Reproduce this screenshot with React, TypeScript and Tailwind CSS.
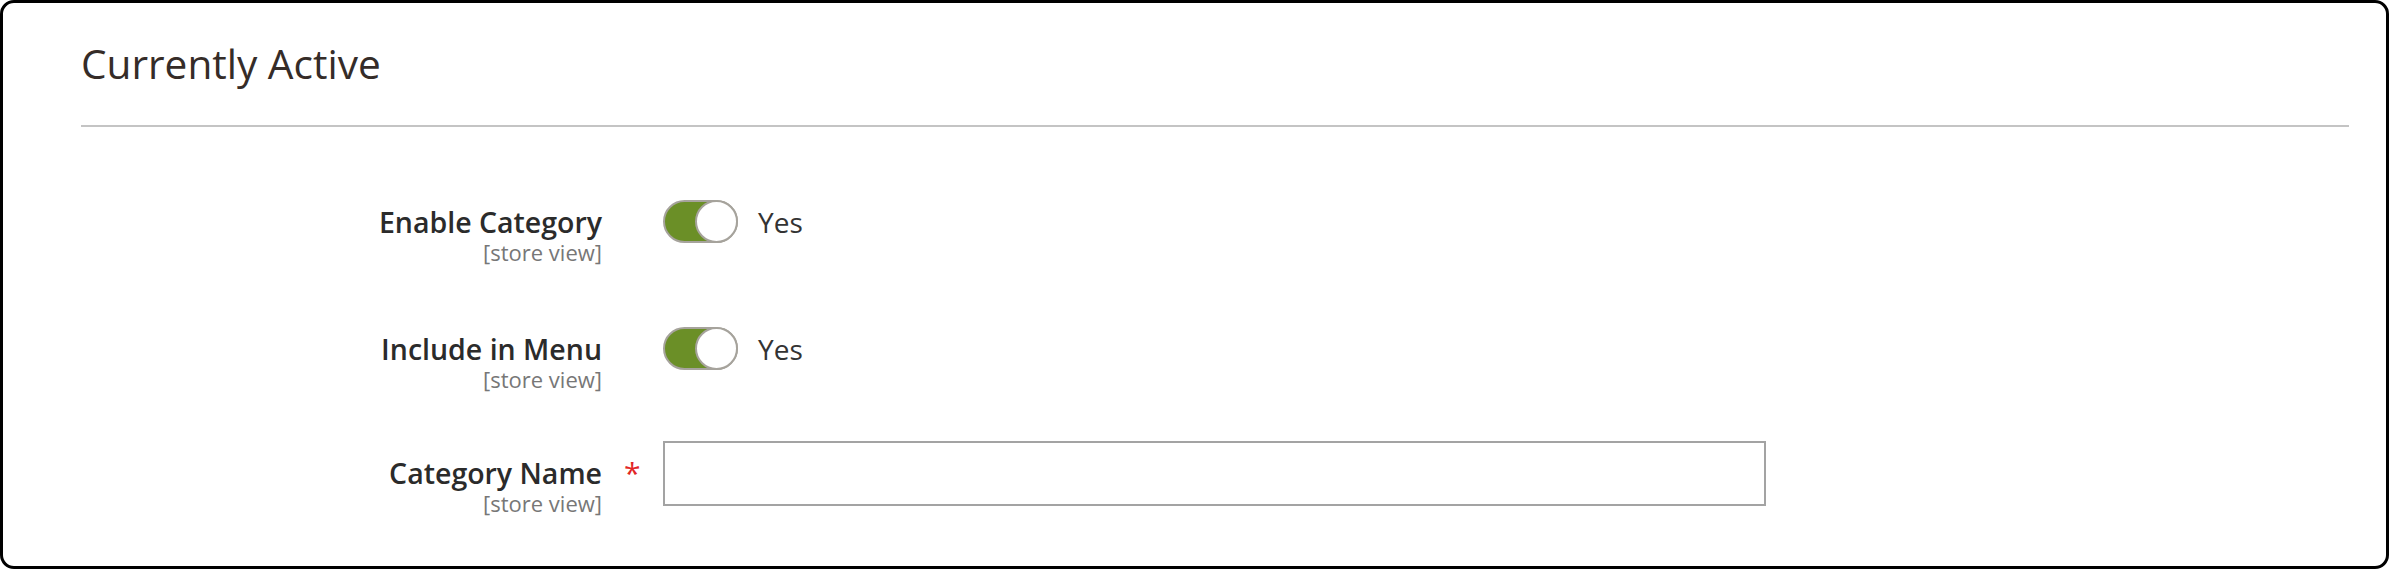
import React from "react";

const font = { fontFamily: '"Open Sans", "Noto Sans", sans-serif' };

function Toggle() {
  return (
    <div className="relative w-[75px] h-[43px] rounded-full bg-[#6b8f27] border-2 border-[#a6a39c] shrink-0">
      <div className="absolute right-[-2px] top-[-2px] w-[43px] h-[43px] rounded-full bg-white border-2 border-[#a6a39c]" />
    </div>
  );
}

function Label({ text }: { text: string }) {
  return (
    <div className="w-[521px] flex flex-col items-end shrink-0">
      <span className="text-[28.5px] leading-[34px] font-semibold text-[#2b2b2b]">{text}</span>
      <span className="text-[22px] leading-[26px] text-[#777777]">[store view]</span>
    </div>
  );
}

export default function App() {
  return (
    <div
      className="w-[2389px] h-[569px] bg-white border-[3px] border-black rounded-[14px] pl-[78px] pr-[37px] pt-[33px] box-border"
      style={font}
    >
      <div className="border-b-2 border-[#c4c4c4] pb-[33px]">
        <h2 className="text-[40.6px] leading-[56px] font-normal text-[#352c28]">Currently Active</h2>
      </div>

      <div className="flex flex-col">
        <div className="flex items-start mt-[73px]">
          <div className="pt-[5px]">
            <Label text="Enable Category" />
          </div>
          <div className="w-[61px] shrink-0" />
          <div className="flex items-center gap-[20px]">
            <Toggle />
            <span className="text-[28px] leading-[34px] text-[#333333]">Yes</span>
          </div>
        </div>

        <div className="flex items-start mt-[62px]">
          <div className="pt-[5px]">
            <Label text="Include in Menu" />
          </div>
          <div className="w-[61px] shrink-0" />
          <div className="flex items-center gap-[20px]">
            <Toggle />
            <span className="text-[28px] leading-[34px] text-[#333333]">Yes</span>
          </div>
        </div>

        <div className="flex items-start mt-[49px]">
          <div className="pt-[15px]">
            <Label text="Category Name" />
          </div>
          <div className="w-[61px] shrink-0 pt-[15px] pl-[22px]">
            <span className="text-[30px] leading-[34px] text-[#e22626]">*</span>
          </div>
          <input
            type="text"
            className="w-[1103px] h-[65px] border-2 border-[#a3a3a3] bg-white outline-none"
          />
        </div>
      </div>
    </div>
  );
}
